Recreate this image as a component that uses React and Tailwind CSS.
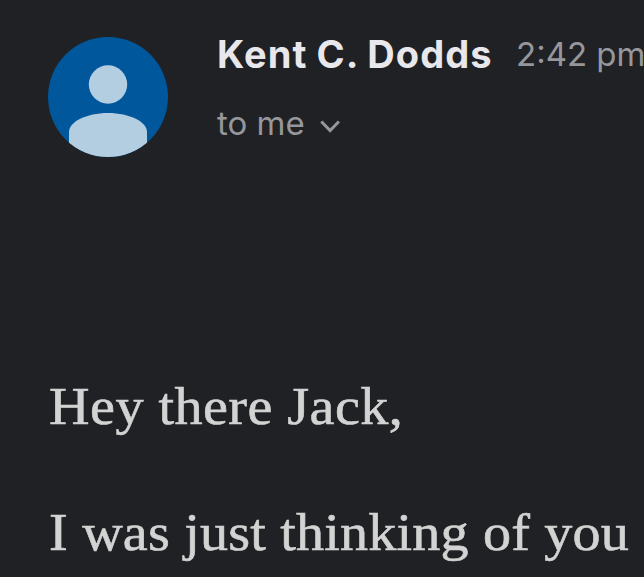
function Avatar() {
  return (
    <svg viewBox="0 0 120 120" className="size-[120px] shrink-0" aria-hidden="true">
      <defs>
        <clipPath id="avatar-circle"><circle cx="60" cy="60" r="60" /></clipPath>
      </defs>
      <g clipPath="url(#avatar-circle)">
        <rect width="120" height="120" fill="#01579b" />
        <circle cx="60" cy="47.5" r="19.2" fill="#b3cde1" />
        <path d="M21 120V95C21 85 38 76 60 76s39 9 39 19v25z" fill="#b3cde1" />
      </g>
    </svg>
  );
}

export default function App() {
  return (
    <main className="h-[577px] w-[644px] overflow-hidden bg-[#202124] pl-12 pt-[37px]">
      <header className="flex h-[120px] gap-[49px] font-['Inter',sans-serif] whitespace-nowrap">
        <Avatar />
        <div>
          <div className="flex h-[34px] items-center">
            <h1 className="w-[299px] text-[38px] leading-9 font-bold tracking-[1.1px] [word-spacing:-1.1px] text-[#e8e8ec]">Kent C. Dodds</h1>
            <time className="text-[33px] leading-9 text-[#96979c]">2:42 pm</time>
          </div>
          <div className="mt-[34px] flex items-center gap-[15px] text-[#96979c]">
            <span className="text-[33px] leading-9">to me</span>
            <svg className="mt-[7px]" width="20" height="13" viewBox="0 0 20 13" fill="none" stroke="currentColor" strokeWidth="3"><path d="m1.3 1.5 8.8 9 8.8-9" /></svg>
          </div>
        </div>
      </header>
      <section className="mt-[218px] w-fit origin-left scale-x-[1.06] pl-px font-['Liberation_Serif',serif] text-[53px] leading-[63px] whitespace-nowrap text-[#d2d3d2] [-webkit-text-stroke:0.6px_#d2d3d2]">
        <p className="tracking-[0.4px]">Hey there Jack,</p>
        <p className="mt-[63px] tracking-[0.15px]">I was just thinking of you</p>
      </section>
    </main>
  );
}
